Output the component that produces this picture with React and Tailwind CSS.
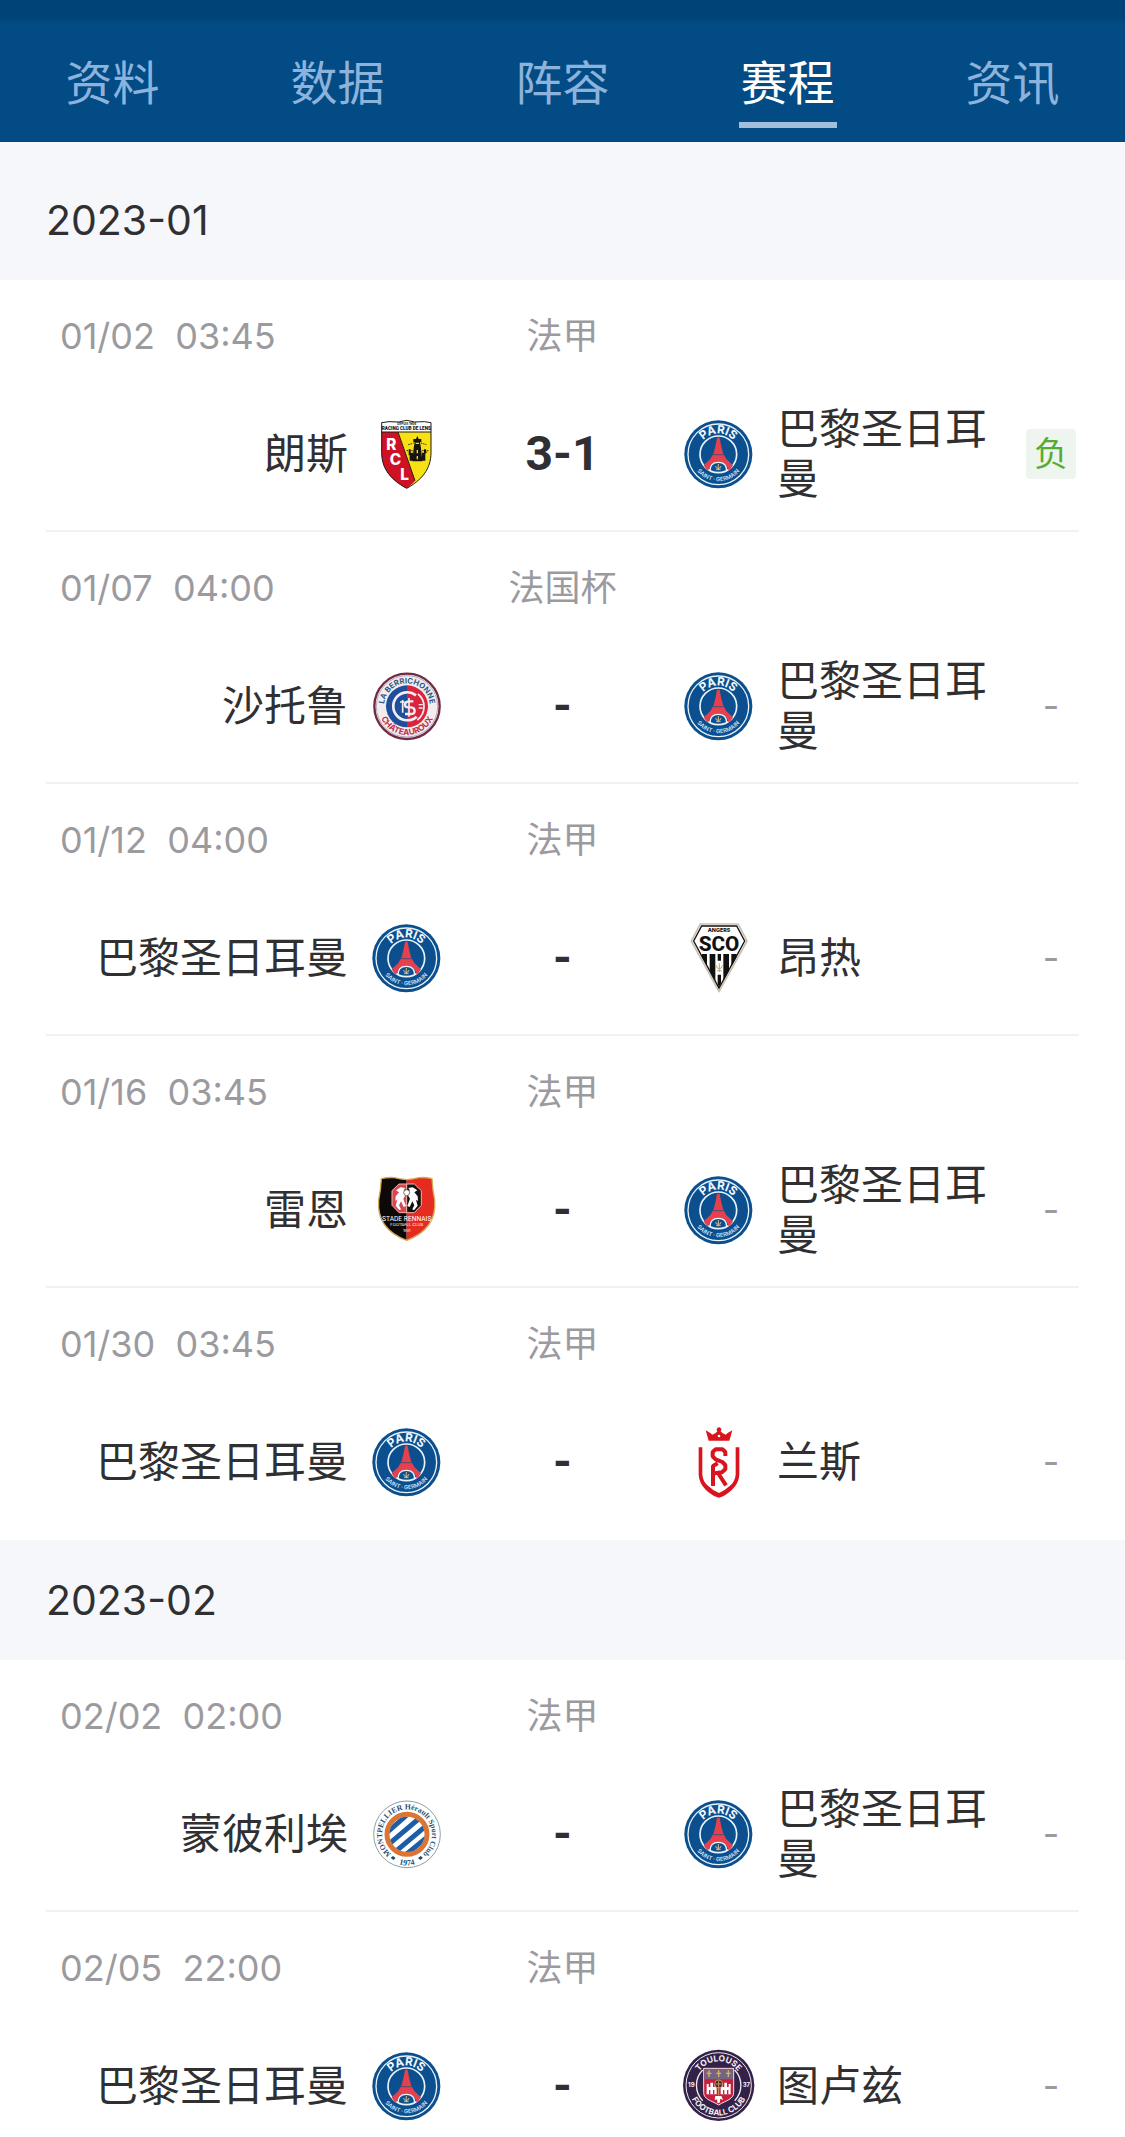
import React, { useId, useState } from 'react';

const tabs = ['资料', '数据', '阵容', '赛程', '资讯'];

const months = [
  {
    label: '2023-01',
    matches: [
      { date: '01/02', time: '03:45', league: '法甲', home: '朗斯', homeCrest: 'lens', away: '巴黎圣日耳曼', awayCrest: 'psg', score: '3-1', result: '负' },
      { date: '01/07', time: '04:00', league: '法国杯', home: '沙托鲁', homeCrest: 'chateauroux', away: '巴黎圣日耳曼', awayCrest: 'psg' },
      { date: '01/12', time: '04:00', league: '法甲', home: '巴黎圣日耳曼', homeCrest: 'psg', away: '昂热', awayCrest: 'angers' },
      { date: '01/16', time: '03:45', league: '法甲', home: '雷恩', homeCrest: 'rennes', away: '巴黎圣日耳曼', awayCrest: 'psg' },
      { date: '01/30', time: '03:45', league: '法甲', home: '巴黎圣日耳曼', homeCrest: 'psg', away: '兰斯', awayCrest: 'reims' },
    ],
  },
  {
    label: '2023-02',
    matches: [
      { date: '02/02', time: '02:00', league: '法甲', home: '蒙彼利埃', homeCrest: 'montpellier', away: '巴黎圣日耳曼', awayCrest: 'psg' },
      { date: '02/05', time: '22:00', league: '法甲', home: '巴黎圣日耳曼', homeCrest: 'psg', away: '图卢兹', awayCrest: 'toulouse' },
    ],
  },
];

// Text on a circle, centred at its top or its bottom. The path is the whole circle,
// so long names can run round the sides.
function ArcText({ cx, cy, r, side = 'top', children, ...rest }) {
  const id = useId();
  const d =
    side === 'top'
      ? `M${cx} ${cy + r}A${r} ${r} 0 0 1 ${cx} ${cy - r}A${r} ${r} 0 0 1 ${cx} ${cy + r}`
      : `M${cx} ${cy - r}A${r} ${r} 0 0 0 ${cx} ${cy + r}A${r} ${r} 0 0 0 ${cx} ${cy - r}`;
  return (
    <>
      <path id={id} fill="none" d={d} />
      <text textAnchor="middle" {...rest}>
        <textPath href={`#${id}`} startOffset="50%">{children}</textPath>
      </text>
    </>
  );
}

function Psg() {
  return (
    <>
      <circle cx="103" cy="103" r="102" fill="#0b4f8f" />
      <circle cx="103" cy="103" r="91" fill="none" stroke="#e8f4fb" strokeWidth="4" />
      <circle cx="103" cy="103" r="55" fill="#0b4f8f" stroke="#e8f4fb" strokeWidth="5" />
      <path fill="#e5404c" d="M99 53h8l4 22 6 24 10 18 20 19q-4 9-13 16-6-25-31-25t-31 25q-9-7-13-16l20-19 10-18 6-24z" />
      <path stroke="#0b4f8f" strokeWidth="2" d="M86 104h34" />
      <path fill="none" stroke="#e8f4fb" strokeWidth="4" d="M78 152q0-25 25-25t25 25" />
      <path fill="none" stroke="#d9b982" strokeWidth="3" d="M103 132v19M95 138q0 7 8 7t8-7M96 148h14" />
      <ArcText cx={103} cy={103} r={62} fill="#f1f9fd" fontSize="35" fontWeight="700">PARIS</ArcText>
      <ArcText cx={103} cy={103} r={81} side="bottom" fill="#c9e2f4" fontSize="17" fontWeight="600">SAINT · GERMAIN</ArcText>
    </>
  );
}

function Lens() {
  return (
    <>
      <path fill="#f7e014" d="M29 8l22-3 29 1 24-5 24 5 29-1 20 3v90c0 50-29 83-73 107-45-24-75-57-75-107z" />
      <path fill="#cf1126" d="M29 35h48l52 147c-8 9-16 16-25 23-45-24-75-57-75-107z" />
      <path stroke="#2a1a12" strokeWidth="3" d="M78 36l51 146" />
      <path fill="#fff" d="M29 8l22-3 29 1 24-5 24 5 29-1 20 3v28H29z" />
      <path fill="none" stroke="#1b1b1b" strokeWidth="3" d="M29 8l22-3 29 1 24-5 24 5 29-1 20 3v90c0 50-29 83-73 107-45-24-75-57-75-107zM29 36h148" />
      <text x="103" y="30" textAnchor="middle" fill="#111" fontSize="14" fontWeight="900" fontFamily="Roboto, sans-serif">RACING CLUB DE LENS</text>
      <text x="104" y="15" textAnchor="middle" fill="#111" fontSize="9" fontWeight="700">DEPUIS 1906</text>
      <g fill="#fff" fontSize="46" fontWeight="800" textAnchor="middle">
        <text x="58" y="89">R</text>
        <text x="70" y="135">C</text>
        <text x="98" y="179">L</text>
      </g>
      <g fill="#171310">
        <path d="M136 48l4 9h8v9h-4l3 18 4 40h-30l4-40 3-18h-4v-9h8z" />
        <path d="M110 88h6v10h7v24h-10v-16h-3zM156 88h6l2 12h-4v22h-10V98h6z" />
      </g>
      <path stroke="#f7e014" strokeWidth="4" d="M131 70h10M136 90v10M136 108v10" />
      <path stroke="#171310" strokeWidth="3" strokeDasharray="4 3" d="M104 92h18M151 92h20M109 74l16-5M147 69l16 5" />
    </>
  );
}

function Chateauroux() {
  return (
    <>
      <circle cx="105" cy="103" r="98" fill="#f4edf0" stroke="#6f2b45" strokeWidth="7" />
      <circle cx="105" cy="103" r="92" fill="none" stroke="#b9a9b9" strokeWidth="3" />
      <path fill="#1f4f9c" d="M105 40a63 63 0 0 0 0 126z" />
      <path fill="#d8243c" d="M105 40a63 63 0 0 1 0 126z" />
      <path fill="none" stroke="#f3eef4" strokeWidth="8" d="M132 70a42 42 0 1 0 2 64" />
      <path fill="none" stroke="#f3eef4" strokeWidth="7" d="M124 88h-14q-11 1-11 10 0 8 11 8h7q11 1 11 10 0 10-12 10H99" />
      <path fill="none" stroke="#f3eef4" strokeWidth="5" d="M92 84v38M84 90h14M111 78v56M138 66q18 14 18 38t-20 40" />
      <path stroke="#f3eef4" strokeWidth="4" d="M140 98h12M140 108h12" />
      <ArcText cx={105} cy={103} r={69} fill="#2b5785" fontSize="23" fontWeight="700">LA BERRICHONNE</ArcText>
      <ArcText cx={105} cy={103} r={86} side="bottom" fill="#bd304a" fontSize="25" fontWeight="700">CHÂTEAUROUX</ArcText>
    </>
  );
}

function Angers() {
  return (
    <>
      <path fill="#fff" stroke="#cbc1b2" strokeWidth="5" strokeLinejoin="round" d="M49 0h113l27 51-84 152L22 51z" />
      <path fill="none" stroke="#111" strokeWidth="4" d="M53 6h105l24 45-77 141L29 51z" />
      <text x="105" y="23" textAnchor="middle" fill="#111" fontSize="16" fontWeight="800">ANGERS</text>
      <text x="105" y="80" textAnchor="middle" fill="#111" fontSize="62" fontWeight="800" fontFamily="Roboto, sans-serif">SCO</text>
      <path fill="#111" d="M54 90h15v36L54 99zM77 90h17v81l-17-31zM101 90h10v20h-10zM101 152h10v26l-6 11-4-8zM118 90h17v50l-17 31zM142 90h16v9l-16 29z" />
      <path fill="none" stroke="#bda87e" strokeWidth="3" d="M106 118v26M97 124q0 10 9 10t9-10M99 140h14" />
    </>
  );
}

function Rennes() {
  return (
    <>
      <path fill="#0d0908" d="M104 11Q84 10 67 5 48 3 28 8q-2 36-8 64c-5 61 25 99 84 121z" />
      <path fill="#e62c20" d="M104 11q20-1 37-6 19-2 39 3 2 36 8 64c5 61-25 99-84 121z" />
      <path fill="none" stroke="#d8a852" strokeWidth="4" strokeLinejoin="round" d="M104 11Q84 10 67 5 48 3 28 8q-2 36-8 64c-5 61 25 99 84 121 59-22 89-60 84-121-6-28-8-64-8-64-20-5-39-3-39-3-17 5-37 6-37 6z" />
      <path fill="#d84553" stroke="#f0b5a8" strokeWidth="3" d="M104 24H81L60 44v44l21 22h23z" />
      <path fill="#151010" stroke="#f0b5a8" strokeWidth="3" d="M104 24h23l21 20v44l-21 22h-23z" />
      <path fill="#fff" d="M86 34l-14 9 9 6-10 12-1 14 6-4-5 18 11 14 5-3-6-12 6-12 8 17 7-3-8-22 7-12-6-14 4-6zM122 34l14 9-9 6 10 12 1 14-6-4 5 18-11 14-5-3 6-12-6-12-8 17-7-3 8-22-7-12 6-14-4-6z" />
      <circle cx="104" cy="50" r="9" fill="#fff" stroke="#333" strokeWidth="2" />
      <g fill="#fff" textAnchor="middle">
        <text x="104" y="135" fontSize="20" fontFamily="Roboto, sans-serif">STADE RENNAIS</text>
        <text x="104" y="150" fontSize="12">FOOTBALL CLUB</text>
        <text x="104" y="167" fontSize="11">1901</text>
      </g>
    </>
  );
}

function Reims() {
  return (
    <g fill="#d8151f">
      <path d="M65 7l14 8 6 5 10-5 5-5a7 7 0 1 1 10 0l5 5 10 5 6-5 14-8-9 31H74z" />
      <circle cx="105" cy="24" r="4" fill="#fff" />
      <path d="M44 58h11v82q2 22 18 34 14 14 32 21 17-7 32-21 16-13 18-34V58h11v83q-2 26-22 44-17 17-39 24-23-7-40-24-19-18-21-44z" />
      <path fill="none" stroke="#d8151f" strokeWidth="12" strokeLinejoin="bevel" d="M124 84V72l-8-8H95l-9 8v13l9 9 20 8 9 9v13l-10 9-22 3M87 174v-60l14-8M102 135l24 37" />
    </g>
  );
}

function Montpellier() {
  const clip = useId();
  return (
    <>
      <circle cx="105" cy="103" r="100" fill="#fff" stroke="#8aa0a4" strokeWidth="3" />
      <clipPath id={clip}>
        <circle cx="105" cy="103" r="53" />
      </clipPath>
      <circle cx="105" cy="103" r="60" fill="#fff" stroke="#dc7434" strokeWidth="15" />
      <g clipPath={`url(#${clip})`} stroke="#1d5da6" strokeWidth="15">
        <path d="M22 118L110 40M30 150L150 48M50 172L174 68M80 182L184 96" />
      </g>
      <ArcText cx={105} cy={103} r={75} fill="#1e4d74" fontSize="23" fontWeight="700" fontFamily="Liberation Serif, serif">
        MONTPELLIER Hérault Sport Club
      </ArcText>
      <ArcText cx={105} cy={103} r={93} side="bottom" fill="#1e4d74" fontSize="24" fontWeight="700" fontFamily="Liberation Serif, serif">
        1974
      </ArcText>
      <path fill="#1e4d74" d="M56 173l7-5 8 6-7 6zM138 174l8-6 7 5-8 7z" />
    </>
  );
}

function Toulouse() {
  return (
    <>
      <circle cx="104" cy="100" r="107" fill="#322247" />
      <circle cx="104" cy="100" r="98" fill="none" stroke="#eee8f2" strokeWidth="3" />
      <path fill="none" stroke="#eee8f2" strokeWidth="4" d="M56 54a66 66 0 0 0 0 92M152 54a66 66 0 0 1 0 92" />
      <path fill="#c6203f" stroke="#f2dfe6" strokeWidth="3" d="M59 49h90v73c0 20-22 23-45 37-23-14-45-17-45-37z" />
      <path fill="#74647f" d="M61 51h86v31H61z" />
      <path stroke="#d3b36e" strokeWidth="4" d="M75 55v20M68 64h14M104 55v20M97 64h14M133 55v20M126 64h14" />
      <path fill="#fff" d="M68 127V96h6v9h5V92h8v13h5v-8h6v30zM110 127V97h6v8h5V92h8v13h5v-9h6v31zM94 132h18l5 12-8-4-2 12-6 2-2-12-7 2z" />
      <path stroke="#c6203f" strokeWidth="4" d="M77 114v13M89 114v13M119 114v13M131 114v13" />
      <circle cx="104" cy="96" r="12" fill="#3d2130" stroke="#c99a58" strokeWidth="3" />
      <path stroke="#c99a58" strokeWidth="3" d="M104 86v44M95 96h18" />
      <ArcText cx={104} cy={100} r={72} fill="#f5f0f7" fontSize="25" fontWeight="700">TOULOUSE</ArcText>
      <ArcText cx={104} cy={100} r={90} side="bottom" fill="#f5f0f7" fontSize="24" fontWeight="700">FOOTBALL CLUB</ArcText>
      <g fill="#f5f0f7" fontSize="18" fontWeight="700" textAnchor="middle">
        <text x="22" y="106">19</text>
        <text x="187" y="106">37</text>
      </g>
    </>
  );
}

const crests = {
  psg: Psg,
  lens: Lens,
  chateauroux: Chateauroux,
  angers: Angers,
  rennes: Rennes,
  reims: Reims,
  montpellier: Montpellier,
  toulouse: Toulouse,
};

function Crest({ team }) {
  const Shape = crests[team];
  return (
    <svg viewBox="0 0 207 207" className="size-[69px] shrink-0 overflow-visible" aria-hidden="true">
      <Shape />
    </svg>
  );
}

function MatchRow({ match }) {
  return (
    <li className="mx-[46px] h-[252px] border-b-2 border-[#f1f1f2] pt-[30px] last:border-b-0">
      <div className="grid grid-cols-[1fr_243px_1fr] px-3.5 text-[36px] leading-[52px] text-[#9b9b9f]">
        <time className="whitespace-pre">{`${match.date}  ${match.time}`}</time>
        <span className="text-center">{match.league}</span>
      </div>
      <div className="mt-10 grid h-[104px] grid-cols-[1fr_243px_1fr] items-center text-[42px] leading-[50px] text-[#303032]">
        <div className="flex items-center justify-end gap-6">
          <span>{match.home}</span>
          <Crest team={match.homeCrest} />
        </div>
        <strong className="text-center font-['Roboto',sans-serif] text-[48px] font-bold">
          {match.score || '-'}
        </strong>
        <div className="flex items-center gap-6">
          <Crest team={match.awayCrest} />
          <span className="mr-[-12px] flex-1">{match.away}</span>
          {match.result ? (
            <span className="mr-[3px] size-[50px] shrink-0 rounded-sm bg-[#edf5ee] text-center text-[34px] text-[#54ad32]">
              {match.result}
            </span>
          ) : (
            <span className="mr-[3px] w-[50px] shrink-0 text-center text-[36px] text-[#9b9b9f]">-</span>
          )}
        </div>
      </div>
    </li>
  );
}

export default function App() {
  const [activeTab, setActiveTab] = useState('赛程');

  return (
    <div className="flex h-screen flex-col bg-white font-['Inter','Noto_Sans_CJK_SC',sans-serif]">
      <header className="shrink-0 border-b border-[#0b4570] bg-[#034b84]">
        <div className="h-6 bg-linear-to-b from-[#004376] from-70% to-[#034b84]" />
        <nav className="grid h-[117px] grid-cols-5">
          {tabs.map((tab) => (
            <button
              key={tab}
              type="button"
              onClick={() => setActiveTab(tab)}
              className={`flex flex-col items-center pt-[26px] text-[47px] leading-[66px] ${
                tab === activeTab ? 'text-white' : 'text-[#8cb3dc]'
              }`}
            >
              {tab}
              {tab === activeTab && <span className="mt-1.5 h-1.5 w-[98px] bg-[#a3bddd]" />}
            </button>
          ))}
        </nav>
      </header>

      <main className="min-h-0 flex-1 overflow-y-auto bg-[#f6f7fa] pt-[18px] [scrollbar-width:none]">
        {months.map((month) => (
          <section key={month.label}>
            <h2 className="px-[46px] text-[41px] leading-[120px] text-[#303032]">{month.label}</h2>
            <ul className="bg-white">
              {month.matches.map((match) => (
                <MatchRow key={match.date} match={match} />
              ))}
            </ul>
          </section>
        ))}
      </main>
    </div>
  );
}
